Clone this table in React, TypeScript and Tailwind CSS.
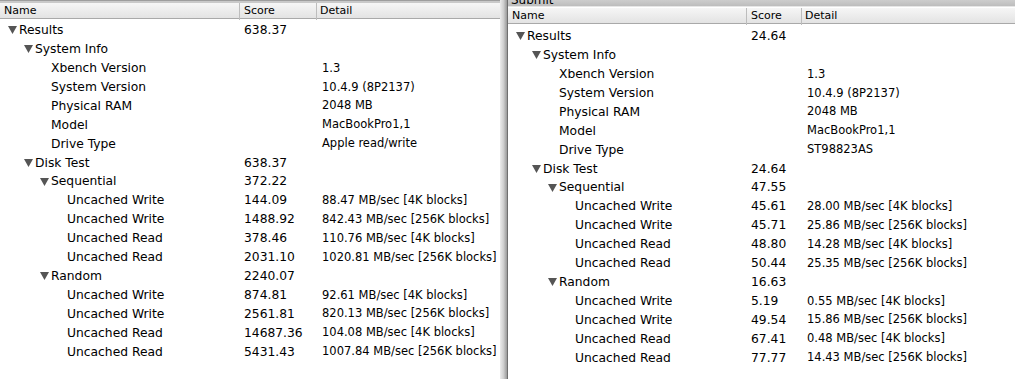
type Row = [number, boolean, string, string, string]

const LEFT: Row[] = [
  [0, true, 'Results', '638.37', ''],
  [1, true, 'System Info', '', ''],
  [2, false, 'Xbench Version', '', '1.3'],
  [2, false, 'System Version', '', '10.4.9 (8P2137)'],
  [2, false, 'Physical RAM', '', '2048 MB'],
  [2, false, 'Model', '', 'MacBookPro1,1'],
  [2, false, 'Drive Type', '', 'Apple read/write'],
  [1, true, 'Disk Test', '638.37', ''],
  [2, true, 'Sequential', '372.22', ''],
  [3, false, 'Uncached Write', '144.09', '88.47 MB/sec [4K blocks]'],
  [3, false, 'Uncached Write', '1488.92', '842.43 MB/sec [256K blocks]'],
  [3, false, 'Uncached Read', '378.46', '110.76 MB/sec [4K blocks]'],
  [3, false, 'Uncached Read', '2031.10', '1020.81 MB/sec [256K blocks]'],
  [2, true, 'Random', '2240.07', ''],
  [3, false, 'Uncached Write', '874.81', '92.61 MB/sec [4K blocks]'],
  [3, false, 'Uncached Write', '2561.81', '820.13 MB/sec [256K blocks]'],
  [3, false, 'Uncached Read', '14687.36', '104.08 MB/sec [4K blocks]'],
  [3, false, 'Uncached Read', '5431.43', '1007.84 MB/sec [256K blocks]'],
]

const RIGHT: Row[] = [
  [0, true, 'Results', '24.64', ''],
  [1, true, 'System Info', '', ''],
  [2, false, 'Xbench Version', '', '1.3'],
  [2, false, 'System Version', '', '10.4.9 (8P2137)'],
  [2, false, 'Physical RAM', '', '2048 MB'],
  [2, false, 'Model', '', 'MacBookPro1,1'],
  [2, false, 'Drive Type', '', 'ST98823AS'],
  [1, true, 'Disk Test', '24.64', ''],
  [2, true, 'Sequential', '47.55', ''],
  [3, false, 'Uncached Write', '45.61', '28.00 MB/sec [4K blocks]'],
  [3, false, 'Uncached Write', '45.71', '25.86 MB/sec [256K blocks]'],
  [3, false, 'Uncached Read', '48.80', '14.28 MB/sec [4K blocks]'],
  [3, false, 'Uncached Read', '50.44', '25.35 MB/sec [256K blocks]'],
  [2, true, 'Random', '16.63', ''],
  [3, false, 'Uncached Write', '5.19', '0.55 MB/sec [4K blocks]'],
  [3, false, 'Uncached Write', '49.54', '15.86 MB/sec [256K blocks]'],
  [3, false, 'Uncached Read', '67.41', '0.48 MB/sec [4K blocks]'],
  [3, false, 'Uncached Read', '77.77', '14.43 MB/sec [256K blocks]'],
]

const INDENT = ['pl-[8px]', 'pl-[24px]', 'pl-[40px]', 'pl-[56px]']

function Disclosure() {
  return (
    <svg width="9" height="8" viewBox="0 0 9 8" className="mr-[2px] shrink-0">
      <path d="M0 0 L9 0 L4.5 8 Z" fill="#555555" />
    </svg>
  )
}

function Outline({ rows, cols, top }: { rows: Row[]; cols: string; top: string }) {
  return (
    <div className={top}>
      {rows.map(([level, toggle, name, score, detail], i) => (
        <div key={i} className={`grid ${cols} h-[18.92px] items-center`}>
          <div className={`flex items-center text-[12.3px] ${INDENT[level]}`}>
            {toggle ? <Disclosure /> : <span className="w-[11px] shrink-0" />}
            <span className="whitespace-nowrap">{name}</span>
          </div>
          <div className="pl-[4px] whitespace-nowrap text-[12.3px]">{score}</div>
          <div className="pl-[5px] whitespace-nowrap">{detail}</div>
        </div>
      ))}
    </div>
  )
}

function Header({ cols }: { cols: string }) {
  return (
    <div
      className={`grid ${cols} h-[16px] items-center border-b border-[#a9a9a9] bg-gradient-to-b from-[#f6f6f6] to-[#e3e3e3] text-[11px]`}
    >
      <div className="pl-[4px] h-full flex items-center border-r border-[#bdbdbd]">Name</div>
      <div className="pl-[4px] h-full flex items-center border-r border-[#bdbdbd]">Score</div>
      <div className="pl-[3px] h-full flex items-center">Detail</div>
    </div>
  )
}

export default function App() {
  const leftCols = 'grid-cols-[240px_77px_1fr]'
  const rightCols = 'grid-cols-[239px_55px_1fr]'
  return (
    <div
      className="flex w-[1015px] h-[379px] overflow-hidden bg-white text-black text-[11.5px]"
      style={{ fontFamily: '"DejaVu Sans", Verdana, sans-serif' }}
    >
      <div className="w-[500px] shrink-0 flex flex-col">
        <div className="h-[3px] bg-[#c9c9c9] border-t border-[#9d9d9d]" />
        <Header cols={leftCols} />
        <Outline rows={LEFT} cols={leftCols} top="pt-[2px]" />
      </div>
      <div className="w-[8px] shrink-0 bg-gradient-to-r from-[#ececec] via-[#cfcfcf] to-[#9a9a9a] border-r border-[#6f6f6f]" />
      <div className="flex-1 flex flex-col">
        <div className="h-[7px] bg-gradient-to-b from-[#cdcdcd] to-[#bdbdbd] border-b border-[#e6e6e6] overflow-hidden relative">
          <span className="absolute left-[3px] top-[-6px] text-[12px] leading-none">Submit</span>
        </div>
        <div className="h-[1px]" />
        <Header cols={rightCols} />
        <Outline rows={RIGHT} cols={rightCols} top="pt-[3px]" />
      </div>
    </div>
  )
}
